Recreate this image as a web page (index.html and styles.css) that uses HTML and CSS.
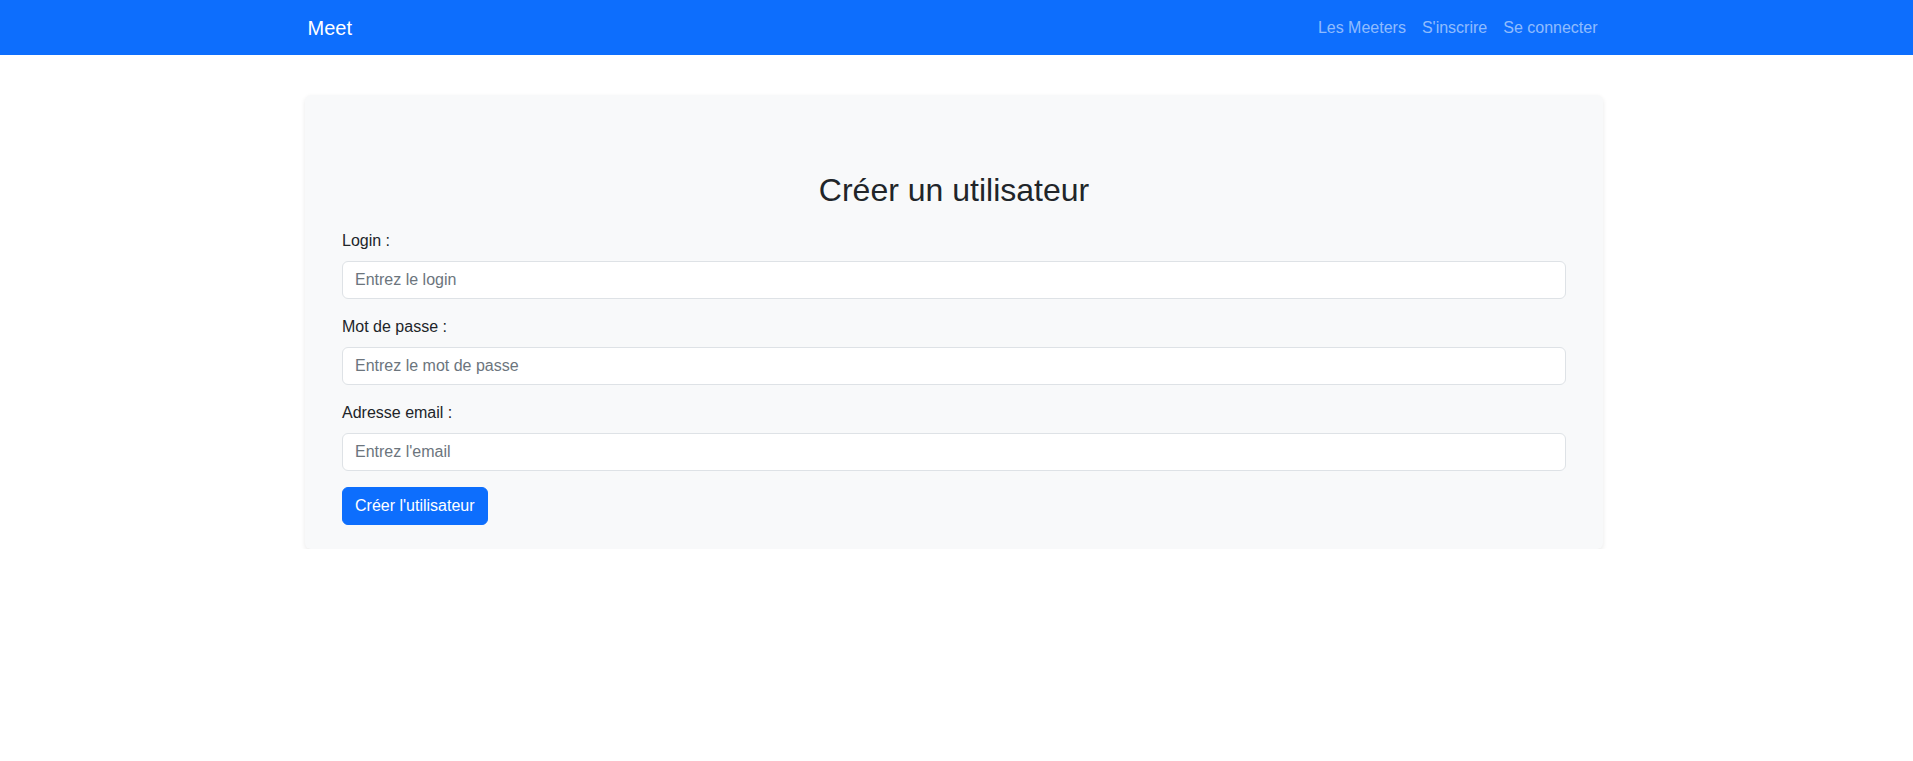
FILE: index.html
```html
<!DOCTYPE html>
<html lang="fr">
<head>
<meta charset="utf-8">
<title>Meet - Créer un utilisateur</title>
<link rel="stylesheet" href="styles.css">
</head>
<body>
<nav class="navbar">
  <div class="container nav-inner">
    <a class="brand" href="#">Meet</a>
    <ul class="nav-links">
      <li><a href="#">Les Meeters</a></li>
      <li><a href="#">S'inscrire</a></li>
      <li><a href="#">Se connecter</a></li>
    </ul>
  </div>
</nav>
<main class="container">
  <section class="card">
    <h2 class="title">Créer un utilisateur</h2>
    <form class="form">
      <div class="group">
        <label for="login">Login :</label>
        <input id="login" type="text" placeholder="Entrez le login">
      </div>
      <div class="group">
        <label for="pwd">Mot de passe :</label>
        <input id="pwd" type="password" placeholder="Entrez le mot de passe">
      </div>
      <div class="group">
        <label for="email">Adresse email :</label>
        <input id="email" type="email" placeholder="Entrez l'email">
      </div>
      <button type="button" class="btn">Créer l'utilisateur</button>
    </form>
  </section>
</main>
</body>
</html>
```

FILE: styles.css
```css
* { box-sizing: border-box; }
html, body {
  margin: 0;
  padding: 0;
  background: #fff;
  color: #212529;
  font-family: "Segoe UI", "Liberation Sans", Arial, sans-serif;
  font-size: 16px;
  line-height: 1.5;
}
body { padding-right: 5px; }
.container {
  max-width: 1298px;
  margin: 0 auto;
}
.navbar {
  background: #0d6efd;
  height: 55px;
  margin-right: -5px;
}
.nav-inner {
  height: 100%;
  display: flex;
  align-items: center;
  justify-content: space-between;
}
.brand {
  color: #fff;
  text-decoration: none;
  font-size: 20px;
  line-height: 30px;
}
.nav-links {
  list-style: none;
  margin: 0;
  padding: 0;
  display: flex;
}
.nav-links a {
  display: block;
  padding: 8px;
  color: rgba(255, 255, 255, 0.55);
  text-decoration: none;
}
.card {
  margin-top: 40px;
  background: #f8f9fa;
  border-radius: 6px;
  box-shadow: 0 2px 5px rgba(0, 0, 0, 0.09);
  padding: 76px 37px 24px;
}
.title {
  margin: 0 0 20px;
  text-align: center;
  font-size: 32px;
  font-weight: 400;
  line-height: 1.2;
}
.group { margin-bottom: 16px; }
.group label {
  display: block;
  margin-bottom: 8px;
}
.group input {
  display: block;
  width: 100%;
  height: 38px;
  padding: 6px 12px;
  font: inherit;
  color: #212529;
  background: #fff;
  border: 1px solid #dee2e6;
  border-radius: 6px;
}
.group input::placeholder { color: #6c757d; opacity: 1; }
.btn {
  display: inline-block;
  height: 38px;
  padding: 6px 12px;
  font: inherit;
  color: #fff;
  background: #0d6efd;
  border: 1px solid #0d6efd;
  border-radius: 6px;
}
```
